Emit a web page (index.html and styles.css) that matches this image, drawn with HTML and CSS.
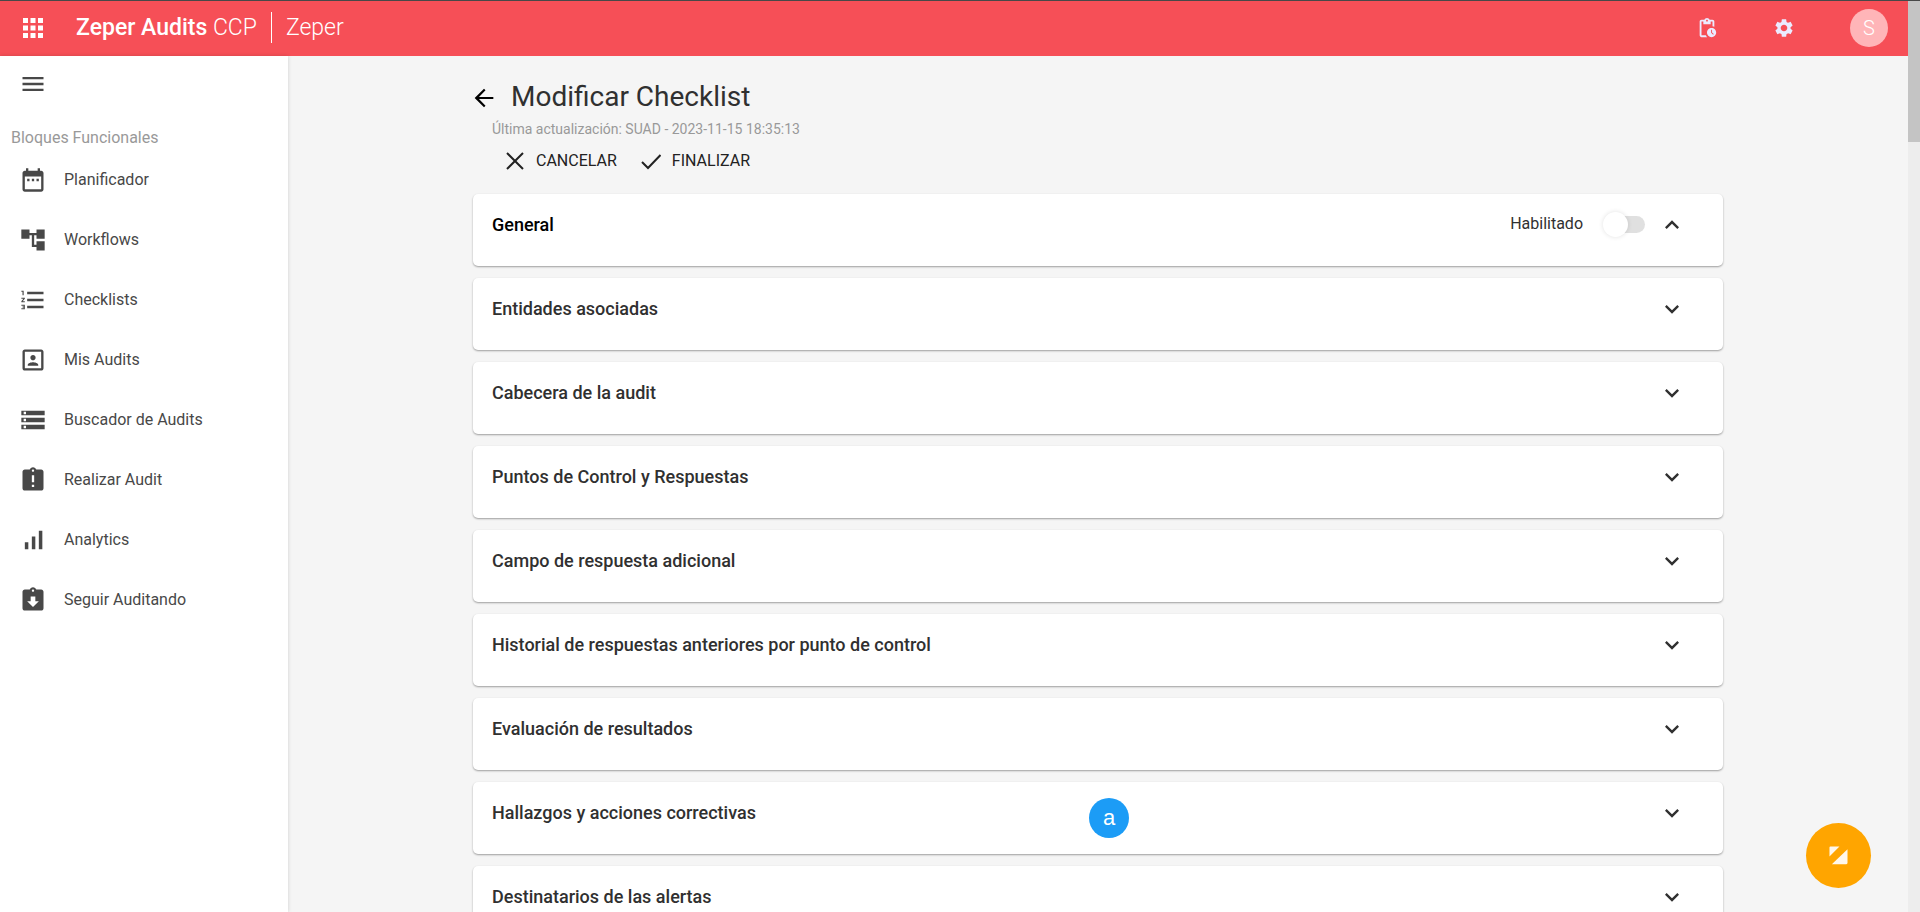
FILE: index.html
```html
<!DOCTYPE html>
<html lang="es">
<head>
<meta charset="utf-8">
<title>Modificar Checklist</title>
<link rel="stylesheet" href="styles.css">
</head>
<body>
<div class="window">
  <div class="app">
    <header class="topbar">
      <button class="icon-btn apps" type="button" aria-label="Aplicaciones">
        <svg class="icon-lg" viewBox="0 0 24 24"><path d="M4 8h4V4H4v4zm6 12h4v-4h-4v4zm-6 0h4v-4H4v4zm0-6h4v-4H4v4zm6 0h4v-4h-4v4zm6-10v4h4V4h-4zm-6 4h4V4h-4v4zm6 6h4v-4h-4v4zm0 6h4v-4h-4v4z"/></svg>
      </button>
      <a class="brand" href="#"><span class="brand-name">Zeper Audits</span> CCP</a>
      <span class="tenant">Zeper</span>
      <div class="tools">
        <button class="icon-btn" type="button" aria-label="Acciones pendientes">
          <svg class="icon-sm" viewBox="0 0 24 24"><path d="M17 12c-2.76 0-5 2.24-5 5s2.240 5 5 5 5-2.240 5-5-2.240-5-5-5zm1.650 7.350L16.500 17.200V14h1v2.790l1.850 1.850-.7.710zM18 3h-3.180C14.400 1.840 13.300 1 12 1s-2.400.84-2.820 2H6c-1.100 0-2 .9-2 2v15c0 1.100.9 2 2 2h6.110c-.59-.57-1.070-1.250-1.420-2H6V5h2v3h8V5h2v5.080c.71.1 1.380.31 2 .6V5c0-1.100-.9-2-2-2zm-6 2c-.55 0-1-.45-1-1s.45-1 1-1 1 .45 1 1-.45 1-1 1z"/></svg>
        </button>
        <button class="icon-btn" type="button" aria-label="Configuración">
          <svg class="icon-sm" viewBox="0 0 24 24"><path d="M19.140 12.940c.04-.3.060-.61.060-.94 0-.32-.02-.64-.07-.94l2.030-1.580c.18-.14.230-.41.120-.61l-1.920-3.320c-.12-.22-.37-.29-.59-.22l-2.390.96c-.5-.38-1.030-.7-1.620-.94l-.36-2.540c-.04-.24-.24-.41-.48-.41h-3.840c-.24 0-.43.170-.47.410l-.36 2.540c-.59.240-1.130.570-1.620.94l-2.390-.96c-.22-.08-.47 0-.59.220L2.740 8.870c-.12.210-.08.470.120.610l2.030 1.580c-.05.3-.09.630-.09.940s.02.640.070.940l-2.030 1.580c-.18.140-.23.410-.12.610l1.920 3.320c.12.220.370.290.590.220l2.390-.96c.5.380 1.030.7 1.620.94l.36 2.540c.05.240.240.410.480.410h3.840c.24 0 .44-.17.470-.41l.36-2.540c.59-.24 1.130-.56 1.620-.94l2.390.96c.22.080.470 0 .59-.22l1.920-3.320c.12-.22.070-.47-.12-.61l-2.010-1.580zM12 15.600c-1.980 0-3.600-1.620-3.600-3.600s1.620-3.600 3.600-3.600 3.600 1.620 3.600 3.600-1.620 3.600-3.600 3.600z"/></svg>
        </button>
        <button class="avatar" type="button" aria-label="Cuenta">S</button>
      </div>
    </header>

    <div class="body">
      <aside class="sidebar">
        <button class="icon-btn menu" type="button" aria-label="Menú">
          <svg class="icon" viewBox="0 0 24 24"><path d="M3 18h18v-2H3v2zm0-5h18v-2H3v2zm0-7v2h18V6H3z"/></svg>
        </button>
        <h2 class="side-title">Bloques Funcionales</h2>
        <nav class="side-nav">
          <a class="side-link" href="#"><svg class="icon" viewBox="0 0 24 24"><path d="M9 11H7v2h2v-2zm4 0h-2v2h2v-2zm4 0h-2v2h2v-2zm2-7h-1V2h-2v2H8V2H6v2H5c-1.110 0-2 .9-2 2v14c0 1.100.89 2 2 2h14c1.100 0 2-.9 2-2V6c0-1.100-.9-2-2-2zm0 16H5V9h14v11z"/></svg>Planificador</a>
          <a class="side-link" href="#"><svg class="icon" viewBox="0 0 24 24"><path d="M22 11V3h-7v3H9V3H2v8h7V8h2v10h4v3h7v-8h-7v3h-2V8h2v3z"/></svg>Workflows</a>
          <a class="side-link" href="#"><svg class="icon" viewBox="0 0 24 24"><path d="M2 17h2v.5H3v1h1v.5H2v1h3v-4H2v1zm1-9h1V4H2v1h1v3zm-1 3h1.800L2 13.100v.9h3v-1H3.200L5 10.900V10H2v1zm5-6v2h14V5H7zm0 14h14v-2H7v2zm0-6h14v-2H7v2z"/></svg>Checklists</a>
          <a class="side-link" href="#"><svg class="icon" viewBox="0 0 24 24"><path d="M12 12.250c1.240 0 2.250-1.010 2.250-2.250S13.240 7.750 12 7.750 9.750 8.760 9.750 10s1.010 2.250 2.250 2.250zm4.500 4c0-1.500-3-2.250-4.500-2.250s-4.500.75-4.500 2.250V17h9v-.75zM19 3H5c-1.100 0-2 .9-2 2v14c0 1.100.9 2 2 2h14c1.100 0 2-.9 2-2V5c0-1.100-.9-2-2-2zm0 16H5V5h14v14z"/></svg>Mis Audits</a>
          <a class="side-link" href="#"><svg class="icon" viewBox="0 0 24 24"><path d="M2 20h20v-4H2v4zm2-3h2v2H4v-2zM2 4v4h20V4H2zm4 3H4V5h2v2zm-4 7h20v-4H2v4zm2-3h2v2H4v-2z"/></svg>Buscador de Audits</a>
          <a class="side-link" href="#"><svg class="icon" viewBox="0 0 24 24"><path d="M19 3h-4.180C14.400 1.840 13.300 1 12 1c-1.300 0-2.400.84-2.820 2H5c-1.100 0-2 .9-2 2v14c0 1.100.9 2 2 2h14c1.100 0 2-.9 2-2V5c0-1.100-.9-2-2-2zm-6 15h-2v-2h2v2zm0-4h-2V8h2v6zm-1-9c-.55 0-1-.45-1-1s.45-1 1-1 1 .45 1 1-.45 1-1 1z"/></svg>Realizar Audit</a>
          <a class="side-link" href="#"><svg class="icon" viewBox="0 0 24 24"><path d="M17 4h3v16h-3V4zM5 14h3v6H5v-6zm6-5h3v11h-3V9z"/></svg>Analytics</a>
          <a class="side-link" href="#"><svg class="icon" viewBox="0 0 24 24"><path d="M19 3h-4.180C14.400 1.840 13.300 1 12 1c-1.300 0-2.400.84-2.820 2H5c-1.100 0-2 .9-2 2v14c0 1.100.9 2 2 2h14c1.100 0 2-.9 2-2V5c0-1.100-.9-2-2-2zm-7 0c.55 0 1 .45 1 1s-.45 1-1 1-1-.45-1-1 .45-1 1-1zm0 15l-5-5h3V9h4v4h3l-5 5z"/></svg>Seguir Auditando</a>
        </nav>
      </aside>

      <main class="main">
        <div class="content">
          <div class="heading">
            <a class="back" href="#" aria-label="Volver"><svg class="icon" viewBox="0 0 24 24"><path d="M20 11.100H7.700l5.600-5.700L12 4l-8 8 8 8 1.300-1.400-5.600-5.700H20z"/></svg></a>
            <h1 class="title">Modificar Checklist</h1>
          </div>
          <p class="updated">Última actualización: SUAD - 2023-11-15 18:35:13</p>
          <div class="actions">
            <button class="action" type="button"><svg class="line-icon" viewBox="0 0 20 20"><path d="M2 2l16 16M18 2L2 18"/></svg>CANCELAR</button>
            <button class="action" type="button"><svg class="line-icon" viewBox="0 0 20 20"><path d="M1 11l6 6L19.500 4"/></svg>FINALIZAR</button>
          </div>
          <div class="cards">
            <section class="card">
              <h2 class="card-title current">General</h2>
              <label class="switch">Habilitado<input class="switch-box" type="checkbox" role="switch"></label>
              <button class="toggle open" type="button" aria-label="Contraer General" aria-expanded="true"><svg class="icon" viewBox="0 0 24 24"><path d="M16.590 8.590L12 13.170 7.410 8.590 6 10l6 6 6-6z"/></svg></button>
            </section>
            <section class="card"><h2 class="card-title">Entidades asociadas</h2><button class="toggle" type="button" aria-label="Expandir Entidades asociadas"><svg class="icon" viewBox="0 0 24 24"><path d="M16.590 8.590L12 13.170 7.410 8.590 6 10l6 6 6-6z"/></svg></button></section>
            <section class="card"><h2 class="card-title">Cabecera de la audit</h2><button class="toggle" type="button" aria-label="Expandir Cabecera de la audit"><svg class="icon" viewBox="0 0 24 24"><path d="M16.590 8.590L12 13.170 7.410 8.590 6 10l6 6 6-6z"/></svg></button></section>
            <section class="card"><h2 class="card-title">Puntos de Control y Respuestas</h2><button class="toggle" type="button" aria-label="Expandir Puntos de Control y Respuestas"><svg class="icon" viewBox="0 0 24 24"><path d="M16.590 8.590L12 13.170 7.410 8.590 6 10l6 6 6-6z"/></svg></button></section>
            <section class="card"><h2 class="card-title">Campo de respuesta adicional</h2><button class="toggle" type="button" aria-label="Expandir Campo de respuesta adicional"><svg class="icon" viewBox="0 0 24 24"><path d="M16.590 8.590L12 13.170 7.410 8.590 6 10l6 6 6-6z"/></svg></button></section>
            <section class="card"><h2 class="card-title">Historial de respuestas anteriores por punto de control</h2><button class="toggle" type="button" aria-label="Expandir Historial de respuestas"><svg class="icon" viewBox="0 0 24 24"><path d="M16.590 8.590L12 13.170 7.410 8.590 6 10l6 6 6-6z"/></svg></button></section>
            <section class="card"><h2 class="card-title">Evaluación de resultados</h2><button class="toggle" type="button" aria-label="Expandir Evaluación de resultados"><svg class="icon" viewBox="0 0 24 24"><path d="M16.590 8.590L12 13.170 7.410 8.590 6 10l6 6 6-6z"/></svg></button></section>
            <section class="card"><h2 class="card-title">Hallazgos y acciones correctivas</h2><button class="toggle" type="button" aria-label="Expandir Hallazgos y acciones correctivas"><svg class="icon" viewBox="0 0 24 24"><path d="M16.590 8.590L12 13.170 7.410 8.590 6 10l6 6 6-6z"/></svg></button><span class="marker">a</span></section>
            <section class="card"><h2 class="card-title">Destinatarios de las alertas</h2><button class="toggle" type="button" aria-label="Expandir Destinatarios de las alertas"><svg class="icon" viewBox="0 0 24 24"><path d="M16.590 8.590L12 13.170 7.410 8.590 6 10l6 6 6-6z"/></svg></button></section>
          </div>
        </div>
      </main>
    </div>
    <button class="fab" type="button" aria-label="Asistente">
      <svg class="fab-icon" viewBox="0 0 20 20"><path d="M1.500 0.500H11L0.500 11V1.500a1 1 0 0 1 1-1z"/><path d="M19.500 3.500V17.500a1.800 1.800 0 0 1-1.800 1.800H3z"/></svg>
    </button>
  </div>
  <div class="scroll-track"><div class="scroll-thumb"></div></div>
</div>
</body>
</html>
```
FILE: styles.css
```css
* { box-sizing: border-box; }

body {
  margin: 0;
  background: #f5f5f5;
  color: #303030;
  font: 400 16px/24px Roboto, "Liberation Sans", sans-serif;
}

h1, h2, p { margin: 0; }
a { color: inherit; text-decoration: none; }

button {
  padding: 0;
  border: 0;
  background: none;
  color: inherit;
  font: inherit;
  cursor: pointer;
}

svg { display: block; flex: none; fill: currentColor; }
.icon { width: 28px; height: 28px; }
.icon-lg { width: 30px; height: 30px; }
.icon-sm { width: 22px; height: 22px; }

.window {
  display: flex;
  height: 100vh;
  overflow: hidden;
  border-top: 1px solid #484848;
}

.app {
  position: relative;
  flex: 1;
  min-width: 0;
  display: flex;
  flex-direction: column;
}

.scroll-track { width: 12px; background: #ededed; }
.scroll-thumb { height: 141px; background: #c4c4c4; }

.topbar {
  flex: none;
  display: flex;
  align-items: center;
  height: 55px;
  padding: 0 20px 2px 18px;
  background: #f64f57;
  color: #fff;
  font-size: 23px;
  font-weight: 300;
}

.brand {
  margin-left: 28px;
  padding-right: 14px;
  border-right: 1px solid #fff;
  line-height: 31px;
}

.brand-name { font-weight: 500; }
.tenant { padding-left: 14px; }

.tools {
  display: flex;
  align-items: center;
  gap: 55px;
  margin-left: auto;
  color: #ebebff;
}

.avatar {
  width: 38px;
  height: 38px;
  border-radius: 50%;
  background: #ffb5b8;
  color: #fff;
  font-size: 20px;
  font-weight: 300;
}

.body { flex: 1; display: flex; min-height: 0; }

.sidebar {
  width: 288px;
  flex: none;
  padding-top: 14px;
  background: #fff;
  box-shadow: 0 0 4px rgba(0, 0, 0, 0.16);
  color: #484848;
}

.menu { display: block; margin-left: 19px; }

.side-title {
  padding: 28px 11px 0;
  color: #999;
  font-size: 16px;
  font-weight: 400;
  line-height: 24px;
}

.side-link {
  display: flex;
  align-items: center;
  gap: 17px;
  height: 60px;
  padding-left: 19px;
}

.main { flex: 1; min-width: 0; padding: 0 24px; overflow: hidden; }
.content { max-width: 1250px; margin: 0 auto; }

.heading { display: flex; align-items: center; gap: 13px; padding-top: 21px; }
.back { padding-top: 2px; margin-left: -3px; color: #000; }
.title { font-size: 28px; font-weight: 400; line-height: 40px; }

.updated {
  padding-left: 19px;
  color: #999;
  font-size: 14px;
  font-weight: 400;
}

.actions { display: flex; gap: 24px; padding: 8px 32px 0; }

.action {
  display: flex;
  align-items: center;
  gap: 11px;
  color: #222;
}

.line-icon {
  width: 20px;
  height: 20px;
  fill: none;
  stroke: currentColor;
  stroke-width: 2;
}

.cards { display: grid; gap: 12px; padding-top: 21px; }

.card {
  position: relative;
  display: flex;
  align-items: flex-start;
  height: 72px;
  padding: 17px 37px 0 19px;
  border-radius: 5px;
  background: #fff;
  box-shadow: 0 1px 2px rgba(0, 0, 0, 0.36);
}

.card-title { flex: 1; font-size: 18px; font-weight: 500; line-height: 28px; }
.current { color: #000; }
.open { transform: rotate(180deg); }

.switch {
  display: flex;
  align-items: center;
  gap: 20px;
  margin-right: 13px;
  line-height: 26px;
}

.switch-box {
  appearance: none;
  position: relative;
  width: 42px;
  height: 17px;
  margin: 0;
  border-radius: 9px;
  background: linear-gradient(90deg, #fff 12px, #e0e0e0 12px);
}

.switch-box::before {
  content: "";
  position: absolute;
  left: 0;
  top: -4px;
  width: 25px;
  height: 25px;
  border-radius: 50%;
  background: #fff;
  box-shadow: 0 0 5px rgba(0, 0, 0, 0.12);
}

.marker {
  position: absolute;
  left: 616px;
  top: 16px;
  width: 40px;
  border-radius: 50%;
  background: #1c9cf6;
  color: #fff;
  font: 22px/40px "Liberation Sans", sans-serif;
  text-align: center;
}

.fab {
  position: absolute;
  right: 37px;
  bottom: 24px;
  display: grid;
  place-items: center;
  width: 65px;
  height: 65px;
  border-radius: 50%;
  background: #ffa500;
  color: #fff7eb;
}

.fab-icon { width: 19px; height: 19px; }
```
